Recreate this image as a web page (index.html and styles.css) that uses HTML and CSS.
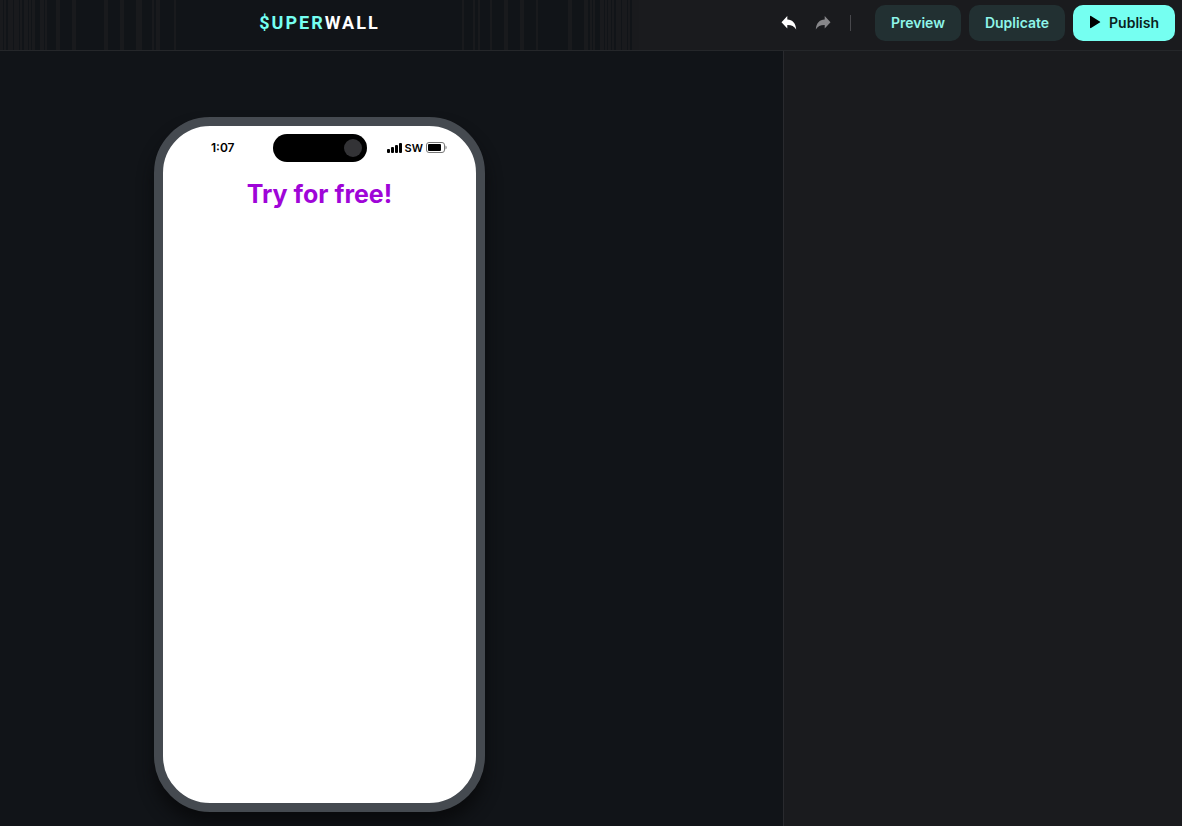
FILE: index.html
```html
<!DOCTYPE html>
<html lang="en">
  <head>
    <meta charset="utf-8">
    <title>Superwall</title>
    <link rel="stylesheet" href="styles.css">
  </head>
  <body>
    <header class="topbar">
      <div class="brand">
        <svg class="stripes" viewBox="0 0 639 50" preserveAspectRatio="none" aria-hidden="true">
          <path d="M0 0h3v50h-3z M4 0h2v50h-2z M8 0h5v50h-5z M14 0h5v50h-5z M20 0h2v50h-2z M24 0h4v50h-4z M29 0h2v50h-2z M32 0h3v50h-3z M40 0h4v50h-4z M45 0h2v50h-2z M56 0h4v50h-4z M72 0h4v50h-4z M104 0h4v50h-4z M120 0h4v50h-4z M136 0h6v50h-6z M152 0h2v50h-2z M156 0h4v50h-4z M174 0h2v50h-2z"/>
          <path d="M462 0h2v50h-2z M473 0h2v50h-2z M478 0h2v50h-2z M490 0h2v50h-2z M504 0h4v50h-4z M520 0h4v50h-4z M536 0h2v50h-2z M568 0h4v50h-4z M584 0h4v50h-4z M590 0h2v50h-2z M593 0h2v50h-2z M600 0h4v50h-4z M605 0h2v50h-2z M608 0h3v50h-3z M612 0h2v50h-2z M616 0h5v50h-5z M622 0h5v50h-5z M628 0h2v50h-2z M632 0h7v50h-7z"/>
        </svg>
        <div class="logo"><span>$UPER</span>WALL</div>
      </div>
      <div class="actions">
        <button class="icon-btn" type="button" aria-label="Undo">
          <svg width="16" height="16" viewBox="0 0 16 16"><path d="M6.300 1v3.600c5.200.3 8.400 3.600 8.900 9.900-2-3.400-4.700-4.700-8.900-4.600v3.500L.5 7.200z"/></svg>
        </button>
        <button class="icon-btn icon-btn-off" type="button" aria-label="Redo" disabled>
          <svg width="16" height="16" viewBox="0 0 16 16"><path d="M9.700 1v3.600C4.500 4.900 1.300 8.200.8 14.500c2-3.400 4.700-4.700 8.900-4.600v3.500l5.800-6.200z"/></svg>
        </button>
        <span class="divider"></span>
        <button class="btn" type="button">Preview</button>
        <button class="btn" type="button">Duplicate</button>
        <button class="btn btn-primary" type="button">
          <svg width="11" height="14" viewBox="0 0 11 14"><path d="M0 1.500v11c0 .6.500.9 1 .6l8.800-5.500c.5-.3.500-.9 0-1.200L1 .9C.5.600 0 .9 0 1.500z"/></svg>
          Publish
        </button>
      </div>
    </header>

    <main class="editor">
      <section class="canvas">
        <div class="phone">
          <div class="status-bar">
            <span class="time">1:07</span>
            <span class="island"><span class="camera"></span></span>
            <span class="signal">
              <svg width="15" height="10" viewBox="0 0 15 10"><rect x="0" y="6" width="3" height="4" rx="1"/><rect x="4" y="4" width="3" height="6" rx="1"/><rect x="8" y="2" width="3" height="8" rx="1"/><rect x="12" y="0" width="3" height="10" rx="1"/></svg>
              SW
              <svg width="21" height="11" viewBox="0 0 21 11"><rect x=".5" y=".5" width="18" height="10" rx="2.500" fill="none" stroke="#777"/><rect x="2" y="2" width="13" height="7" rx="1"/><path d="M19.500 3.500c1.500.5 1.500 3.500 0 4z" fill="#777"/></svg>
            </span>
          </div>
          <h1 class="headline">Try for free!</h1>
        </div>
      </section>
      <aside class="panel"></aside>
    </main>
  </body>
</html>
```

FILE: styles.css
```css
* {
  box-sizing: border-box;
}

body {
  margin: 0;
  min-height: 100vh;
  display: flex;
  flex-direction: column;
  background: #111418;
  font-family: Inter, "Liberation Sans", sans-serif;
}

button {
  border: 0;
  font-family: inherit;
  cursor: pointer;
}

/* Top bar */
.topbar {
  display: grid;
  grid-template-columns: 1fr 543px;
  background: #1a1b1e;
  border-bottom: 1px solid #25272a;
}

.brand {
  position: relative;
  display: flex;
  align-items: center;
  justify-content: center;
  background: #111418;
}

.stripes {
  position: absolute;
  top: 0;
  left: 0;
  width: 100%;
  height: 100%;
  fill: #191a1d;
}

.logo {
  position: relative;
  padding-bottom: 4px;
  color: #fff;
  font-family: Roboto, sans-serif;
  font-size: 18px;
  line-height: 20px;
  font-weight: 700;
  letter-spacing: 2px;
}

.logo span {
  color: #75fff1;
}

.actions {
  display: flex;
  align-items: center;
  justify-content: flex-end;
  gap: 8px;
  padding: 5px 7px 9px 0;
}

.icon-btn {
  display: flex;
  padding: 5px;
  background: none;
  fill: #fff;
}

.icon-btn-off {
  fill: #87878a;
}

.divider {
  width: 1px;
  height: 16px;
  margin: 0 16px 0 6px;
  background: #48484c;
}

.btn {
  display: flex;
  align-items: center;
  gap: 8px;
  height: 36px;
  padding: 0 16px 2px;
  border-radius: 10px;
  background: #223032;
  color: #8ef5e9;
  font-size: 14px;
  font-weight: 600;
}

.btn-primary {
  padding-left: 17px;
  background: #75fff1;
  color: #0b1f20;
}

/* Editor */
.editor {
  flex: 1;
  display: grid;
  grid-template-columns: 1fr 399px;
}

.canvas {
  display: flex;
  justify-content: center;
  align-items: flex-start;
  padding: 66px 144px 14px 0;
}

.panel {
  background: #1a1b1e;
  border-left: 1px solid #292a2e;
}

/* Device preview */
.phone {
  width: 331px;
  aspect-ratio: 331 / 695;
  border: 9px solid #454a50;
  border-radius: 56px;
  background: #fff;
  box-shadow: 0 12px 16px #0a0b0d;
}

.status-bar {
  display: grid;
  grid-template-columns: 1fr 94px 1fr;
  align-items: center;
  padding-top: 8px;
  color: #000;
}

.time,
.signal {
  padding-bottom: 1px;
  font-weight: 600;
}

.time {
  padding-left: 10px;
  text-align: center;
  font-size: 12px;
}

.island {
  display: flex;
  justify-content: flex-end;
  padding: 5px;
  border-radius: 14px;
  background: #000;
}

.camera {
  width: 18px;
  height: 18px;
  border-radius: 50%;
  background: #333336;
}

.signal {
  display: flex;
  align-items: center;
  gap: 3px;
  padding-left: 20px;
  font-size: 11px;
}

.headline {
  margin: 16px 0 0;
  color: #9f05d8;
  font-size: 25px;
  line-height: 32px;
  font-weight: 700;
  text-align: center;
}
```
